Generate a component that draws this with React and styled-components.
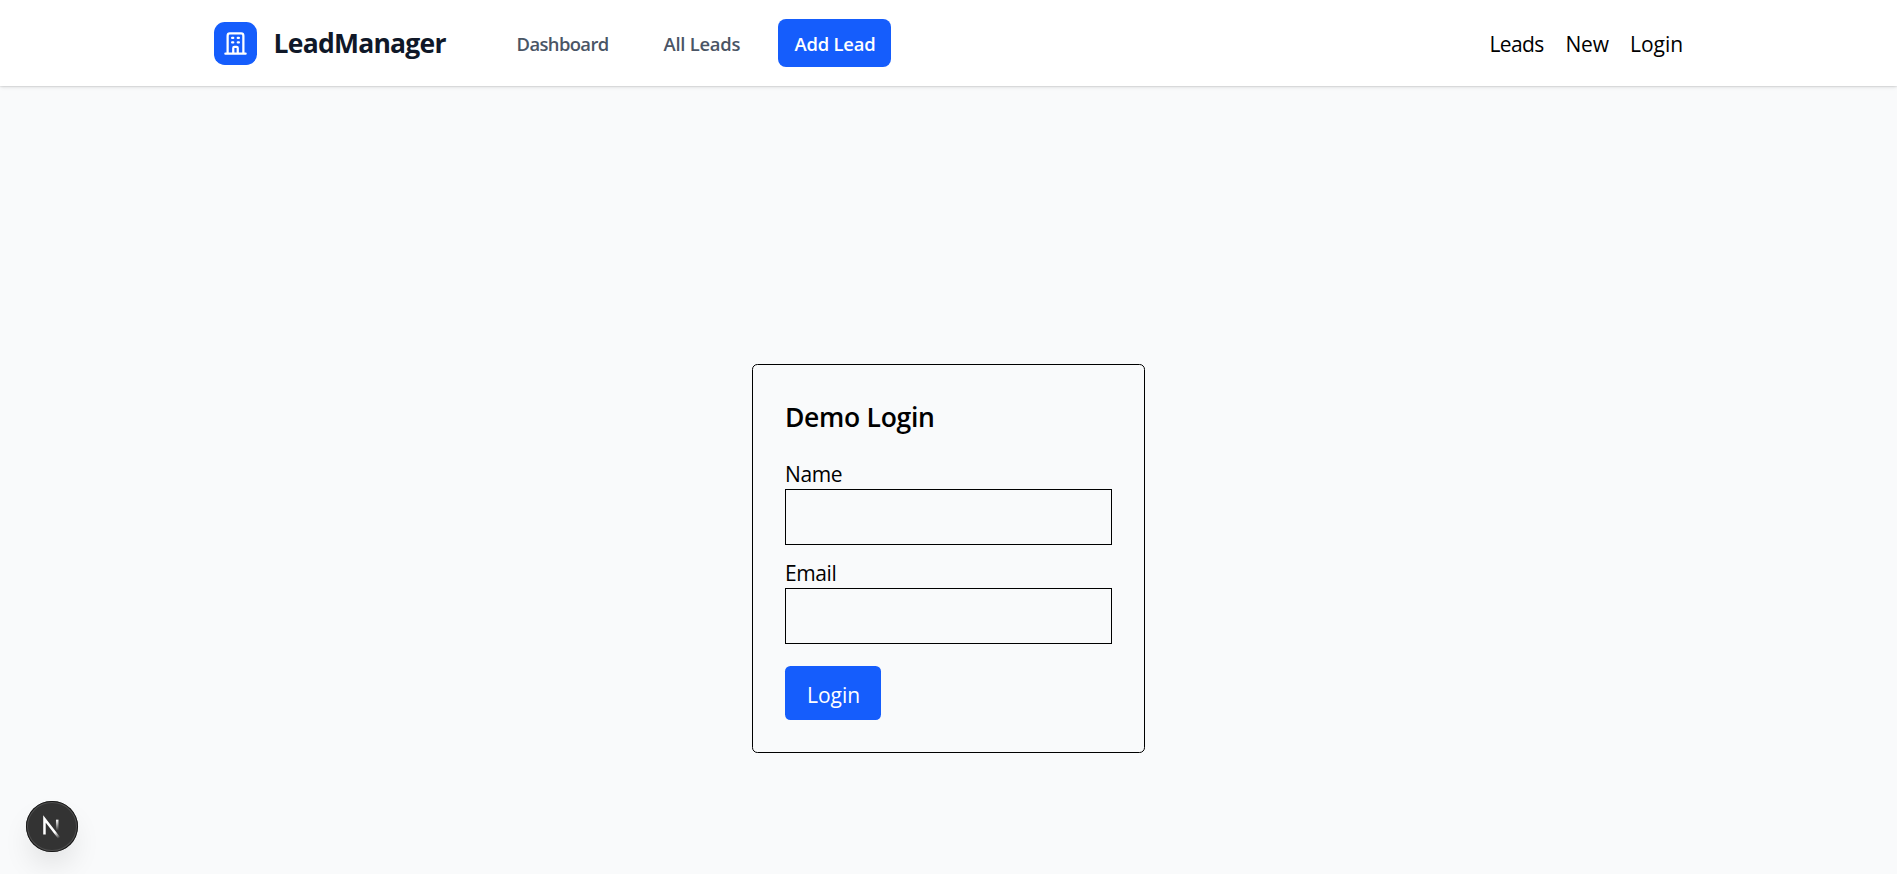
import React from "react";
import styled, { createGlobalStyle } from "styled-components";

const GlobalStyle = createGlobalStyle`
  *, *::before, *::after { box-sizing: border-box; margin: 0; padding: 0; }
  html { font-size: 21.5px; }
  body {
    background: #f9fafb;
    color: #000;
    font-family: "Segoe UI", "Open Sans", "Noto Sans", sans-serif;
    line-height: 1.5;
    overflow: hidden;
  }
`;

const Page = styled.div`
  display: flex;
  flex-direction: column;
  height: 100vh;
`;

const Header = styled.header`
  height: 86px;
  flex: none;
  background: #fff;
  box-shadow: 0 1px 4px rgba(0, 0, 0, 0.1), 0 1px 2.7px -1px rgba(0, 0, 0, 0.1), 0 1px 1px rgba(0, 0, 0, 0.04);
  display: flex;
  align-items: center;
  padding: 0 214px;
`;

const Brand = styled.div`
  display: flex;
  align-items: center;
  width: 286px;
`;

const LogoBox = styled.div`
  width: 43px;
  height: 43px;
  margin-right: 16px;
  border-radius: 10.75px;
  background: #155dfc;
  display: grid;
  place-items: center;
`;

const Text = styled.span`
  display: block;
  white-space: nowrap;
  font-size: ${(p) => p.$size}px;
  font-weight: ${(p) => p.$weight || 400};
  letter-spacing: ${(p) => p.$track || 0}px;
`;

const BrandName = styled(Text)`
  color: #101828;
  padding: 2px 0 0 0.5px;
`;

const Nav = styled.nav`
  display: flex;
  align-items: center;
  gap: 21.5px;
`;

const NavLink = styled.a`
  width: ${(p) => p.$width}px;
  height: 48px;
  padding: 2px 0 0 16.5px;
  display: flex;
  align-items: center;
  border-radius: 8px;
  color: ${(p) => (p.$primary ? "#fff" : "#4a5565")};
  background: ${(p) => (p.$primary ? "#155dfc" : "transparent")};
`;

const SideNav = styled.nav`
  display: flex;
  margin-left: auto;
  padding-top: 4px;
`;

const SideLink = styled.a`
  width: ${(p) => p.$width}px;
`;

const Main = styled.main`
  flex: 1;
  padding-top: 278px;
  display: flex;
  justify-content: center;
  align-items: flex-start;
`;

const Card = styled.form`
  width: 393px;
  height: 389px;
  border: 1px solid #000;
  border-radius: 5.4px;
  padding: 32px;
`;

const Title = styled(Text).attrs({ as: "h1" })`
  height: 38px;
  line-height: 41px;
  margin-bottom: 22px;
`;

const Field = styled.label`
  display: block;
  height: 88px;
  margin-bottom: 11px;
`;

const FieldLabel = styled(Text)`
  height: 32px;
  line-height: 35px;
`;

const Input = styled.input`
  display: block;
  width: 327px;
  height: 56px;
  border: 1px solid #000;
  background: transparent;
  font: inherit;
  padding: 11px;
`;

const Submit = styled.button`
  display: block;
  width: 96px;
  height: 54px;
  margin-top: 22px;
  padding: 3px 0 0 22px;
  border: 0;
  border-radius: 5.4px;
  background: #155dfc;
  color: #fff;
  font-family: inherit;
  text-align: left;
`;

const DevBadge = styled.div`
  position: fixed;
  left: 26px;
  top: 800.5px;
  width: 51.5px;
  height: 51.5px;
  border-radius: 50%;
  background: #333;
  box-shadow: inset 0 0 0 1px #171717, inset 0 0 0 2px rgba(255, 255, 255, 0.14),
    0 16px 32px -8px rgba(0, 0, 0, 0.16);
`;

const BuildingIcon = () => (
  <svg width="27" height="27" viewBox="0 0 24 24" fill="none" stroke="#fff" strokeWidth="2" strokeLinecap="round" strokeLinejoin="round">
    <path d="M19 21V5a2 2 0 00-2-2H7a2 2 0 00-2 2v16m14 0h2m-2 0h-5m-9 0H3m2 0h5M9 7h1m-1 4h1m4-4h1m-1 4h1m-5 10v-5a1 1 0 011-1h2a1 1 0 011 1v5m-4 0h4" />
  </svg>
);

const NextMark = () => (
  <svg width="52" height="52" viewBox="0 0 52 52" fill="none" style={{ display: "block" }}>
    <defs>
      <linearGradient id="diag" x1="9.95555" y1="11.1226" x2="15.4778" y2="17.9671" gradientUnits="userSpaceOnUse">
        <stop stopColor="#fff" />
        <stop offset="0.604072" stopColor="#fff" stopOpacity="0" />
        <stop offset="1" stopColor="#fff" stopOpacity="0" />
      </linearGradient>
      <linearGradient id="stem" x1="11.8222" y1="1.40039" x2="11.791" y2="9.62542" gradientUnits="userSpaceOnUse">
        <stop stopColor="#fff" />
        <stop offset="1" stopColor="#fff" stopOpacity="0" />
      </linearGradient>
    </defs>
    <g transform="translate(3.9 -0.8) scale(1.344) translate(8.5 13)" strokeWidth="1.86">
      <path d="M13.3 15.2L2.34 1V12.6" stroke="url(#diag)" />
      <path d="M11.825 1.5V13.1" stroke="url(#stem)" />
    </g>
  </svg>
);

export default function App() {
  return (
    <Page>
      <GlobalStyle />
      <Header>
        <Brand>
          <LogoBox><BuildingIcon /></LogoBox>
          <BrandName $size={26.5} $weight={700} $track={-0.75}>LeadManager</BrandName>
        </Brand>
        <Nav>
          <NavLink $width={125.5}><Text $size={18.4} $weight={600} $track={-0.6}>Dashboard</Text></NavLink>
          <NavLink $width={109.5}><Text $size={18.4} $weight={600} $track={-0.25}>All Leads</Text></NavLink>
          <NavLink $width={113} $primary><Text $size={18.4} $weight={600} $track={-0.2}>Add Lead</Text></NavLink>
        </Nav>
        <SideNav>
          <SideLink $width={76}><Text $size={21} $track={-0.6}>Leads</Text></SideLink>
          <SideLink $width={64.5}><Text $size={21} $track={-0.2}>New</Text></SideLink>
          <SideLink $width={53}><Text $size={21}>Login</Text></SideLink>
        </SideNav>
      </Header>
      <Main>
        <Card onSubmit={(e) => e.preventDefault()}>
          <Title $size={26.5} $weight={600} $track={-0.3}>Demo Login</Title>
          <Field><FieldLabel $size={21} $track={-0.4}>Name</FieldLabel><Input /></Field>
          <Field><FieldLabel $size={21} $track={-0.4}>Email</FieldLabel><Input /></Field>
          <Submit><Text $size={21}>Login</Text></Submit>
        </Card>
      </Main>
      <DevBadge><NextMark /></DevBadge>
    </Page>
  );
}
